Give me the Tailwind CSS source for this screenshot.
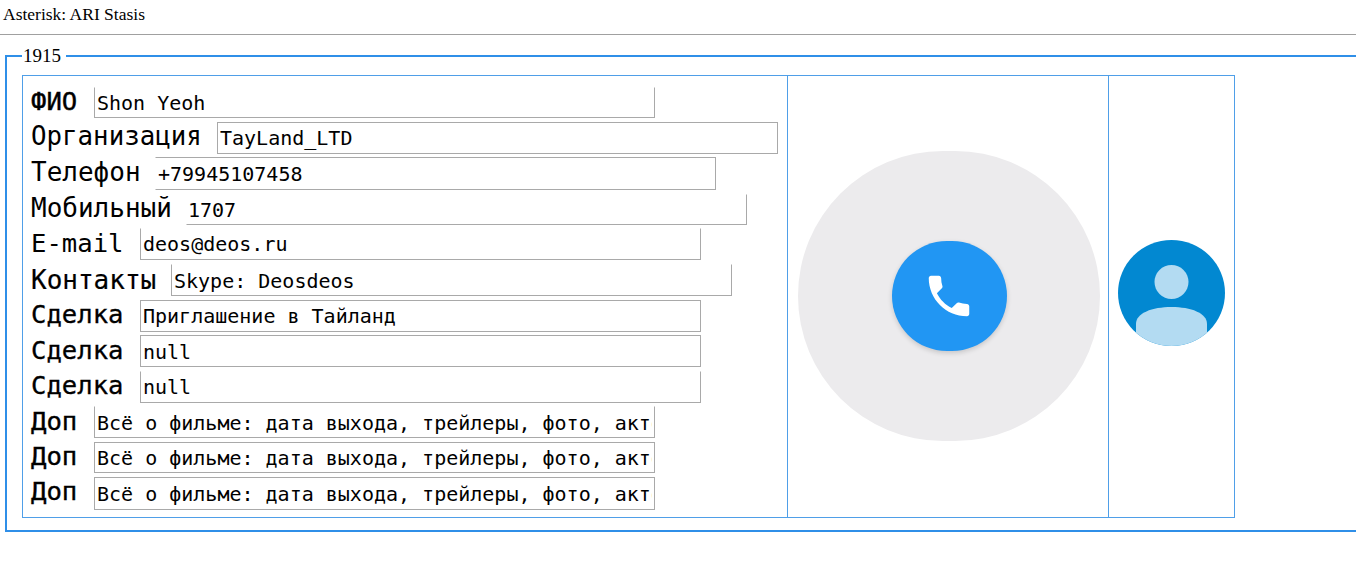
<!doctype html>
<html>
<head>
<meta charset="utf-8">
<script src="https://cdn.jsdelivr.net/npm/@tailwindcss/browser@4"></script>
</head>
<body class="bg-white overflow-hidden font-['Liberation_Serif',serif] text-black">
<div class="h-[565px] w-[1356px] overflow-hidden">
  <p class="pl-[3px] pt-[5px] h-[34px] text-[17.5px] leading-[18px]">Asterisk: ARI Stasis</p>
  <hr class="border-0 border-t border-[#a0a0a0] h-[2px]">
  <fieldset class="relative mt-[19px] ml-[5px] w-[1400px] h-[477px] border-2 border-[#2f8fe8] pl-[15px] pt-[18px]">
    <legend class="absolute left-[15px] top-[-11px] bg-white pl-[1px] pr-[5px] text-[19px] leading-[20px]">1915</legend>
    <div class="flex h-[443px] w-[1213px] border border-[#4f9fe8]">
      <div class="w-[765px] shrink-0 border-r border-[#4f9fe8] pl-[8px] pt-[11px] font-['DejaVu_Sans_Mono',monospace]">
        <div class="flex items-start h-[35px]"><span class="text-[25.6px] leading-[28px] w-[63px] [-webkit-text-stroke:0.4px_black]">ФИО</span><input class="h-[31px] w-[561px] border border-[#a9a9a9] border-t-transparent px-[2px] text-[20px] text-black" value="Shon Yeoh"></div>
        <div class="flex items-start h-[35px]"><span class="text-[25.8px] leading-[28px] w-[186px]">Организация</span><input class="h-[32px] w-[561px] border border-[#a9a9a9] px-[2px] text-[20px] text-black" value="TayLand_LTD"></div>
        <div class="flex items-start h-[36px]"><span class="text-[26px] leading-[30px] w-[124px]">Телефон</span><input class="h-[33px] w-[561px] border border-[#a9a9a9] border-l-transparent px-[2px] text-[20px] text-black" value="+79945107458"></div>
        <div class="flex items-start h-[35px]"><span class="text-[26px] leading-[30px] w-[155px]">Мобильный</span><input class="h-[31px] mt-[1px] w-[561px] border border-[#a9a9a9] border-l-transparent border-t-transparent pl-[1px] pr-[2px] text-[20px] text-black" value="1707"></div>
        <div class="flex items-start h-[36px]"><span class="text-[25.6px] leading-[30px] w-[109px]">E-mail</span><input class="h-[32px] w-[561px] border border-[#a9a9a9] border-t-transparent px-[2px] text-[20px] text-black" value="deos@deos.ru"></div>
        <div class="flex items-start h-[36px]"><span class="text-[26px] leading-[32px] w-[140px] [-webkit-text-stroke:0.2px_black]">Контакты</span><input class="h-[32px] w-[561px] border border-[#a9a9a9] border-t-transparent px-[2px] pt-[2px] text-[20px] text-black" value="Skype: Deosdeos"></div>
        <div class="flex items-start h-[35px]"><span class="text-[25.6px] leading-[28px] w-[109px] [-webkit-text-stroke:0.3px_black]">Сделка</span><input class="h-[32px] w-[561px] border border-[#a9a9a9] px-[2px] text-[20px] text-black" value="Приглашение в Тайланд"></div>
        <div class="flex items-start h-[36px]"><span class="text-[25.6px] leading-[30px] w-[109px] [-webkit-text-stroke:0.3px_black]">Сделка</span><input class="h-[32px] w-[561px] border border-[#a9a9a9] px-[2px] pt-[2px] text-[20px] text-black" value="null"></div>
        <div class="flex items-start h-[35px]"><span class="text-[25.6px] leading-[28px] w-[109px] [-webkit-text-stroke:0.3px_black]">Сделка</span><input class="h-[32px] w-[561px] border border-[#a9a9a9] border-t-transparent px-[2px] text-[20px] text-black" value="null"></div>
        <div class="flex items-start h-[36px]"><span class="text-[25.6px] leading-[30px] w-[63px] [-webkit-text-stroke:0.4px_black]">Доп</span><input class="h-[32px] w-[561px] border border-[#a9a9a9] border-t-transparent px-[2px] pt-[2px] text-[20px] text-black" value="Всё о фильме: дата выхода, трейлеры, фото, актёры"></div>
        <div class="flex items-start h-[35px]"><span class="text-[25.6px] leading-[28px] w-[63px] [-webkit-text-stroke:0.4px_black]">Доп</span><input class="h-[31px] w-[561px] border border-[#a9a9a9] px-[2px] text-[20px] text-black" value="Всё о фильме: дата выхода, трейлеры, фото, актёры"></div>
        <div class="flex items-start h-[35px]"><span class="text-[25.6px] leading-[28px] w-[63px] [-webkit-text-stroke:0.4px_black]">Доп</span><input class="h-[33px] w-[561px] border border-[#a9a9a9] px-[2px] text-[20px] text-black" value="Всё о фильме: дата выхода, трейлеры, фото, актёры"></div>
      </div>
      <div class="w-[321px] shrink-0 border-r border-[#4f9fe8] flex items-center justify-center pl-[1px] pb-[2px]">
        <div class="w-[302px] h-[290px] rounded-full bg-[#ecebed] flex items-center justify-center pl-[1px]">
          <div class="w-[115px] h-[110px] rounded-full bg-[#2196f3] shadow-[0_2px_5px_rgba(0,0,0,0.16)] flex items-center justify-center">
            <svg class="w-[54px] h-[54px] text-white" viewBox="0 0 24 24" fill="currentColor"><path d="M6.62 10.79c1.44 2.83 3.76 5.14 6.59 6.59l2.2-2.2c.27-.27.67-.36 1.02-.24 1.12.37 2.33.57 3.57.57.55 0 1 .45 1 1V20c0 .55-.45 1-1 1-9.39 0-17-7.61-17-17 0-.55.45-1 1-1h3.5c.55 0 1 .45 1 1 0 1.25.2 2.45.57 3.57.11.35.03.74-.25 1.02l-2.2 2.2z"/></svg>
          </div>
        </div>
      </div>
      <div class="w-[125px] shrink-0 flex items-center justify-center pb-[8px]">
        <svg class="w-[107px] h-[106px]" viewBox="0 0 107 106">
          <defs><clipPath id="c"><ellipse cx="53.5" cy="53" rx="53.5" ry="53"/></clipPath></defs>
          <g clip-path="url(#c)">
            <rect width="107" height="106" fill="#0288d1"/>
            <circle cx="53.5" cy="42" r="17" fill="#b3dbf2"/>
            <path d="M18 94V84C18 73 34 67 53.5 67S89 73 89 84V106H18Z" fill="#b3dbf2"/>
          </g>
        </svg>
      </div>
    </div>
  </fieldset>
</div>
</body>
</html>
